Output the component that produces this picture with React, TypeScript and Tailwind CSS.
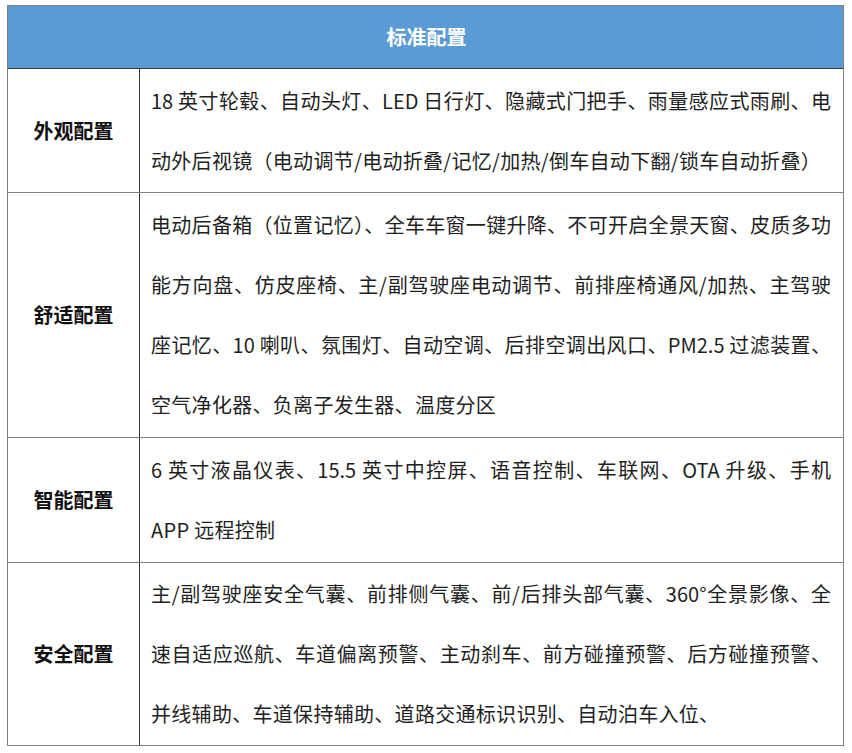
const rows = [
  {
    label: "外观配置",
    h: "h-[124px]",
    lines: [
      "18 英寸轮毂、自动头灯、LED 日行灯、隐藏式门把手、雨量感应式雨刷、电",
      "动外后视镜（电动调节/电动折叠/记忆/加热/倒车自动下翻/锁车自动折叠）",
    ],
  },
  {
    label: "舒适配置",
    h: "h-[245px]",
    lines: [
      "电动后备箱（位置记忆）、全车车窗一键升降、不可开启全景天窗、皮质多功",
      "能方向盘、仿皮座椅、主/副驾驶座电动调节、前排座椅通风/加热、主驾驶",
      "座记忆、10 喇叭、氛围灯、自动空调、后排空调出风口、PM2.5 过滤装置、",
      "空气净化器、负离子发生器、温度分区",
    ],
  },
  {
    label: "智能配置",
    h: "h-[125px]",
    lines: [
      "6 英寸液晶仪表、15.5 英寸中控屏、语音控制、车联网、OTA 升级、手机",
      "APP 远程控制",
    ],
  },
  {
    label: "安全配置",
    h: "h-[183px]",
    lines: [
      "主/副驾驶座安全气囊、前排侧气囊、前/后排头部气囊、360°全景影像、全",
      "速自适应巡航、车道偏离预警、主动刹车、前方碰撞预警、后方碰撞预警、",
      "并线辅助、车道保持辅助、道路交通标识识别、自动泊车入位、",
    ],
  },
]

export default function App() {
  return (
    <div
      className="w-[852px] h-[753px] bg-white pt-[5px] pl-[7px]"
      style={{ fontFamily: '"Noto Sans CJK SC", "Noto Sans", sans-serif' }}
    >
      <div className="w-[837px] border-x border-[#7f7f7f]">
        {/* Header */}
        <div className="h-[64px] bg-[#5b9bd5] border-t border-[#7f7f7f] border-b border-b-[#2f3c4a] flex items-center justify-center">
          <span className="text-white font-bold text-[20px] pl-[2px]">标准配置</span>
        </div>

        {/* Rows */}
        {rows.map((row) => (
          <div key={row.label} className={`flex border-b border-[#7f7f7f] ${row.h}`}>
            <div className="w-[132px] shrink-0 border-r border-[#333333] flex items-center justify-center">
              <span className="text-[20px] font-bold text-[#111111]">{row.label}</span>
            </div>
            <div className="flex-1 flex flex-col justify-center pl-[11px] text-[20px] leading-[60px] text-[#1f1f1f]">
              {row.lines.map((line, i) =>
                i < row.lines.length - 1 ? (
                  <div key={line} className="w-[680px] whitespace-nowrap text-justify [text-align-last:justify]">
                    {line}
                  </div>
                ) : (
                  <div key={line} className="whitespace-nowrap tracking-[0.3px]">
                    {line}
                  </div>
                )
              )}
            </div>
          </div>
        ))}
      </div>
    </div>
  )
}
